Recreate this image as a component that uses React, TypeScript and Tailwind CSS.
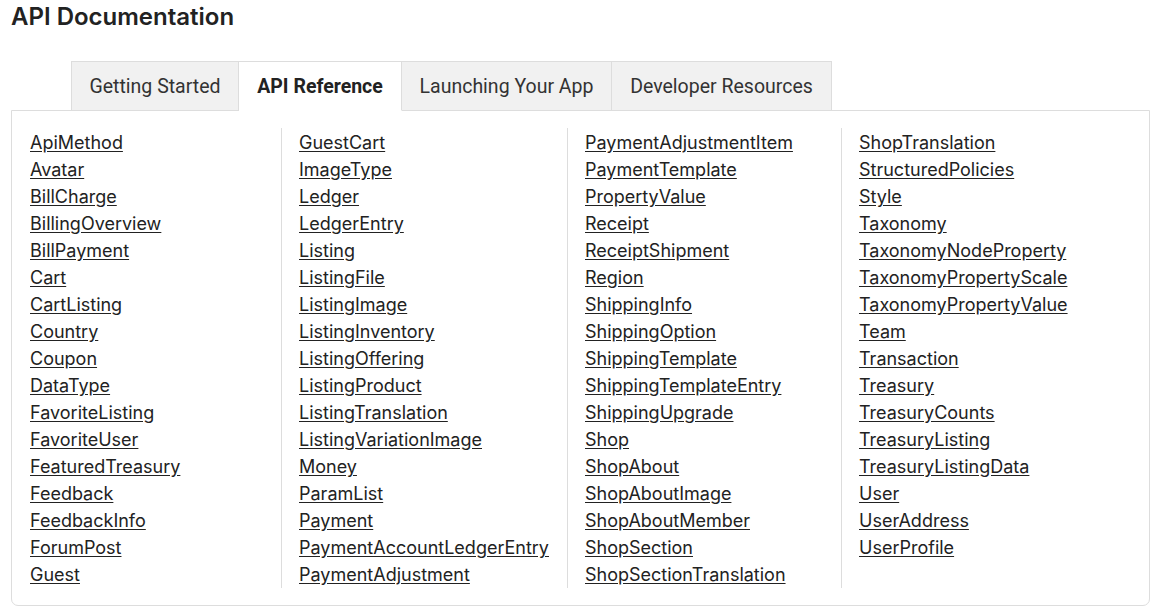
import React from 'react';

const tabs = [
  { label: 'Getting Started', w: 'w-[168px]' },
  { label: 'API Reference', w: 'w-[163px]', active: true },
  { label: 'Launching Your App', w: 'w-[210px]' },
  { label: 'Developer Resources', w: 'w-[220px]' },
];

const columns = [
  {
    w: 'w-[251px]',
    items: ['ApiMethod', 'Avatar', 'BillCharge', 'BillingOverview', 'BillPayment', 'Cart', 'CartListing', 'Country', 'Coupon', 'DataType', 'FavoriteListing', 'FavoriteUser', 'FeaturedTreasury', 'Feedback', 'FeedbackInfo', 'ForumPost', 'Guest'],
  },
  {
    w: 'w-[286px]',
    items: ['GuestCart', 'ImageType', 'Ledger', 'LedgerEntry', 'Listing', 'ListingFile', 'ListingImage', 'ListingInventory', 'ListingOffering', 'ListingProduct', 'ListingTranslation', 'ListingVariationImage', 'Money', 'ParamList', 'Payment', 'PaymentAccountLedgerEntry', 'PaymentAdjustment'],
  },
  {
    w: 'w-[274px]',
    items: ['PaymentAdjustmentItem', 'PaymentTemplate', 'PropertyValue', 'Receipt', 'ReceiptShipment', 'Region', 'ShippingInfo', 'ShippingOption', 'ShippingTemplate', 'ShippingTemplateEntry', 'ShippingUpgrade', 'Shop', 'ShopAbout', 'ShopAboutImage', 'ShopAboutMember', 'ShopSection', 'ShopSectionTranslation'],
  },
  {
    w: 'flex-1',
    items: ['ShopTranslation', 'StructuredPolicies', 'Style', 'Taxonomy', 'TaxonomyNodeProperty', 'TaxonomyPropertyScale', 'TaxonomyPropertyValue', 'Team', 'Transaction', 'Treasury', 'TreasuryCounts', 'TreasuryListing', 'TreasuryListingData', 'User', 'UserAddress', 'UserProfile'],
  },
];

export default function App() {
  return (
    <div className="min-h-screen bg-white text-[#222] font-['Roboto',sans-serif]">
      <h1 className="pl-[11px] pt-[2px] h-[61px] text-[24px] leading-[30px] font-semibold font-['Inter',sans-serif]">API Documentation</h1>

      <div className="pl-[11px] pr-[8px]">
        {/* Tabs */}
        <div className="flex pl-[60px] relative z-10">
          {tabs.map((t) => (
            <div
              key={t.label}
              className={`${t.w} h-[50px] pt-[2px] flex items-center justify-center text-[19.5px] border-t border-[#ddd] border-r first:border-l ${
                t.active ? 'bg-white font-bold border-b border-b-white' : 'bg-[#f1f1f1] text-[#333] border-b border-b-[#ddd]'
              }`}
            >
              {t.label}
            </div>
          ))}
        </div>

        {/* Panel */}
        <div className="-mt-px border border-[#ddd] rounded-b-[7px] pt-[17px] pb-[17px] pl-[18px] flex h-[496px]">
          {columns.map((col, i) => (
            <div key={i} className={`${col.w} ${i > 0 ? 'border-l border-[#ddd] pl-[17px]' : ''} self-start h-[460px]`}>
              {col.items.map((name) => (
                <div key={name} className="h-[27px] leading-[29px]">
                  <a href="#" className="text-[18px] text-[#222] underline underline-offset-[2px] font-['Inter',sans-serif]">
                    {name}
                  </a>
                </div>
              ))}
            </div>
          ))}
        </div>
      </div>
    </div>
  );
}
